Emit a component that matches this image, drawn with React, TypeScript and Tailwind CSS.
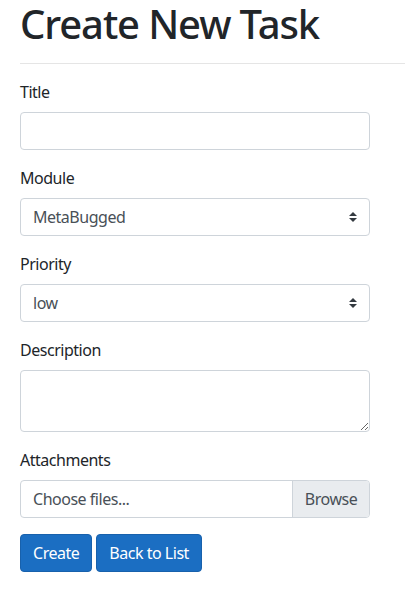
import type { ReactNode } from 'react';

const font = { fontFamily: '"Noto Sans", "Open Sans", Arial, sans-serif' };

const SelectArrows = () => (
  <svg
    className="pointer-events-none absolute right-[13px] top-1/2 -translate-y-1/2"
    width="8"
    height="10"
    viewBox="0 0 4 5"
  >
    <path fill="#343a40" d="M2 0L0 2h4zm0 5L0 3h4z" />
  </svg>
);

const Field = ({ label, children }: { label: string; children: ReactNode }) => (
  <div className="mb-4">
    <label className="mb-2 block text-base leading-6 text-[#212529]">{label}</label>
    {children}
  </div>
);

const inputCls =
  'block w-full h-[38px] rounded border border-[#ced4da] bg-white px-3 text-base text-[#495057] tracking-[-0.03em] outline-none';

const App = () => {
  return (
    <div className="min-h-screen bg-white pl-5 pt-px tracking-[-0.03em]" style={font}>
      <h1 className="mb-2 text-[40px] font-medium leading-[46px] text-[#212529] tracking-[-0.028em]">Create New Task</h1>
      <hr className="my-4 border-0 border-t border-[#e5e5e5]" />

      <form className="w-[350px]">
        <Field label="Title">
          <input type="text" className={inputCls} />
        </Field>

        <Field label="Module">
          <div className="relative">
            <select className={`${inputCls} appearance-none pr-8`} defaultValue="MetaBugged">
              <option>MetaBugged</option>
            </select>
            <SelectArrows />
          </div>
        </Field>

        <Field label="Priority">
          <div className="relative">
            <select className={`${inputCls} appearance-none pr-8`} defaultValue="low">
              <option>low</option>
              <option>medium</option>
              <option>high</option>
            </select>
            <SelectArrows />
          </div>
        </Field>

        <Field label="Description">
          <textarea className="block h-[62px] w-full rounded border border-[#ced4da] bg-white px-3 py-1.5 text-base text-[#495057] outline-none" />
        </Field>

        <Field label="Attachments">
          <div className="flex h-[38px] w-full overflow-hidden rounded border border-[#ced4da] bg-white text-base text-[#495057]">
            <span className="flex flex-1 items-center px-3">Choose files...</span>
            <span className="flex w-[77px] items-center justify-center border-l border-[#ced4da] bg-[#e9ecef]">
              Browse
            </span>
          </div>
        </Field>

        <div className="flex gap-1">
          <button
            type="button"
            className="h-[38px] rounded border border-[#1861ac] bg-[#1b6ec2] px-3 text-base text-white tracking-[-0.03em]"
          >
            Create
          </button>
          <button
            type="button"
            className="h-[38px] rounded border border-[#1861ac] bg-[#1b6ec2] px-3 text-base text-white tracking-[-0.03em]"
          >
            Back to List
          </button>
        </div>
      </form>
    </div>
  );
};

export default App;
